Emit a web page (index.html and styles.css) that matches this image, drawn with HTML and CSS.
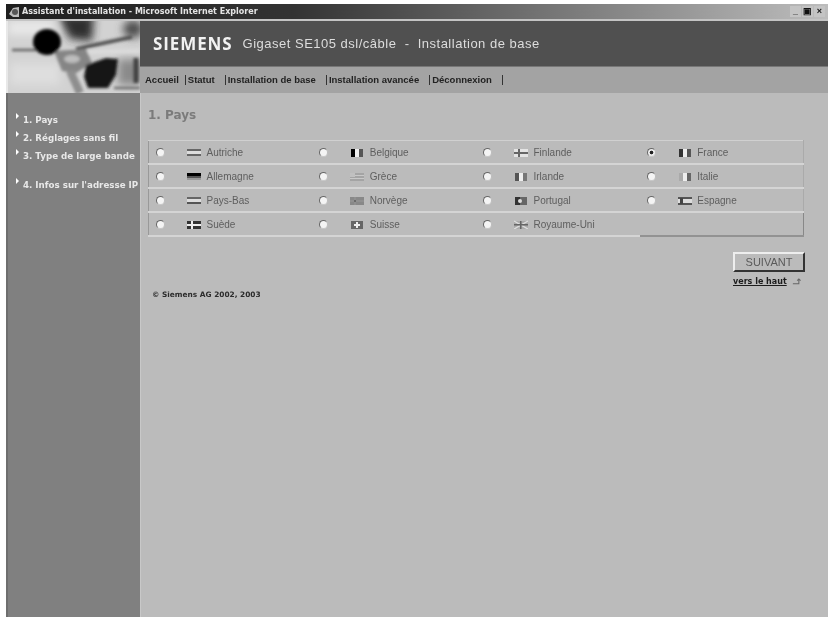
FILE: index.html

```html
<!DOCTYPE html>
<html lang="fr">
<head>
  <meta charset="UTF-8" />
  <title>Assistant d'installation - Microsoft Internet Explorer</title>
  <link rel="stylesheet" href="styles.css">
</head>
<body>
  <div class="window">
    <div class="titlebar">
      <svg class="ie-icon" viewBox="0 0 12 12"><path d="M1 8 L5 2 L11 1 L11 11 L5 11 Z" fill="#bbb"/><circle cx="7" cy="6" r="3" fill="#555"/></svg>
      <span class="title-text">Assistant d'installation - Microsoft Internet Explorer</span>
      <div class="win-buttons">
        <span class="win-btn">_</span>
        <span class="win-btn">&#9635;</span>
        <span class="win-btn">×</span>
      </div>
    </div>

    <div class="page">
      <div class="photo">
        <svg viewBox="0 0 132 72" width="132" height="72">
          <defs>
            <filter id="soft" x="-5%" y="-5%" width="110%" height="110%"><feGaussianBlur stdDeviation="1.6"/></filter>
            <filter id="softer" x="-20%" y="-20%" width="140%" height="140%"><feGaussianBlur stdDeviation="4"/></filter>
          </defs>
          <rect width="132" height="72" fill="#d2d2d2"/>
          <g filter="url(#softer)">
            <rect x="0" y="0" width="46" height="14" fill="#e8e8e8"/>
            <rect x="2" y="42" width="50" height="22" fill="#dedede"/>
            <path d="M50 -6 L86 -6 L84 20 L62 18 Z" fill="#2e2e2e"/>
            <ellipse cx="125" cy="8" rx="10" ry="9" fill="#4c4c4c"/>
            <rect x="110" y="38" width="22" height="26" fill="#8a8a8a"/>
          </g>
          <g filter="url(#soft)">
            <path d="M4 29 H29" stroke="#5c5c5c" stroke-width="2.4" fill="none"/>
            <path d="M68 28 L124 16" stroke="#4a4a4a" stroke-width="3.5" fill="none"/>
            <path d="M76 31 L132 30" stroke="#dcdcdc" stroke-width="4" fill="none"/>
            <path d="M46 30 L78 28 L84 42 L68 52 L54 50 Z" fill="#858585"/>
            <ellipse cx="64" cy="38" rx="8" ry="4" fill="#bdbdbd"/>
            <ellipse cx="39" cy="21" rx="14" ry="13" fill="#060606"/>
            <path d="M78 44 L98 37 L110 38 L108 54 L100 67 L80 67 L76 56 Z" fill="#161616"/>
            <path d="M62 50 L72 72" stroke="#8e8e8e" stroke-width="8" fill="none"/>
            <path d="M128 37 V62" stroke="#3c3c3c" stroke-width="5" fill="none"/>
            <path d="M106 67 H132" stroke="#5a5a5a" stroke-width="2" fill="none"/>
          </g>
        </svg>
      </div>

      <header class="brand">
        <span class="brand-name">SIEMENS</span>
        <span class="brand-title">Gigaset SE105 dsl/câble &nbsp;-&nbsp; Installation de base</span>
      </header>

      <nav class="topnav">
        <a>Accueil</a><a>Statut</a><a>Installation de base</a><a>Installation avancée</a><a>Déconnexion</a><i></i>
      </nav>

      <aside class="sidebar">
        <a class="step">1. Pays</a>
        <a class="step">2. Réglages sans fil</a>
        <a class="step">3. Type de large bande</a>
        <a class="step step-gap">4. Infos sur l'adresse IP</a>
      </aside>

      <main class="content">
        <h1>1. Pays</h1>

        <table class="countries">
          <tr>
            <td><input type="radio" name="pays"><svg class="flag" viewBox="0 0 14 9"><rect y="1" width="14" height="2" fill="#666"/><rect y="3" width="14" height="3" fill="#ddd"/><rect y="6" width="14" height="2" fill="#666"/></svg>Autriche</td>
            <td><input type="radio" name="pays"><svg class="flag" viewBox="0 0 14 9"><rect x="1" y="1" width="4" height="8" fill="#000"/><rect x="5" y="1" width="4" height="8" fill="#eee"/><rect x="9" y="1" width="4" height="8" fill="#555"/></svg>Belgique</td>
            <td><input type="radio" name="pays"><svg class="flag" viewBox="0 0 14 9"><rect y="1" width="14" height="8" fill="#e4e4e4"/><rect y="4" width="14" height="2" fill="#666"/><rect x="4" y="1" width="2" height="8" fill="#666"/></svg>Finlande</td>
            <td><input type="radio" name="pays" checked><svg class="flag" viewBox="0 0 14 9"><rect x="1" y="1" width="4" height="8" fill="#333"/><rect x="5" y="1" width="4" height="8" fill="#eee"/><rect x="9" y="1" width="4" height="8" fill="#555"/></svg>France</td>
          </tr>
          <tr>
            <td><input type="radio" name="pays"><svg class="flag" viewBox="0 0 14 9"><rect y="1" width="14" height="3" fill="#000"/><rect y="4" width="14" height="2" fill="#555"/><rect y="6" width="14" height="2" fill="#999"/></svg>Allemagne</td>
            <td><input type="radio" name="pays"><svg class="flag" viewBox="0 0 14 9"><rect y="1" width="14" height="8" fill="#a4a4a4"/><rect y="3" width="14" height="1" fill="#c8c8c8"/><rect y="6" width="14" height="1" fill="#c8c8c8"/><rect y="1" width="5" height="4" fill="#c0c0c0"/></svg>Grèce</td>
            <td><input type="radio" name="pays"><svg class="flag" viewBox="0 0 14 9"><rect x="1" y="1" width="4" height="8" fill="#555"/><rect x="5" y="1" width="4" height="8" fill="#eee"/><rect x="9" y="1" width="4" height="8" fill="#777"/></svg>Irlande</td>
            <td><input type="radio" name="pays"><svg class="flag" viewBox="0 0 14 9"><rect x="1" y="1" width="4" height="8" fill="#aaa"/><rect x="5" y="1" width="4" height="8" fill="#eee"/><rect x="9" y="1" width="4" height="8" fill="#666"/></svg>Italie</td>
          </tr>
          <tr>
            <td><input type="radio" name="pays"><svg class="flag" viewBox="0 0 14 9"><rect y="1" width="14" height="2" fill="#666"/><rect y="3" width="14" height="3" fill="#ddd"/><rect y="6" width="14" height="2" fill="#555"/></svg>Pays-Bas</td>
            <td><input type="radio" name="pays"><svg class="flag" viewBox="0 0 14 9"><rect y="1" width="14" height="8" fill="#888"/><rect y="4" width="14" height="2" fill="#ddd"/><rect x="4" y="1" width="2" height="8" fill="#ddd"/><rect y="4.5" width="14" height="1" fill="#444"/><rect x="4.5" y="1" width="1" height="8" fill="#444"/></svg>Norvège</td>
            <td><input type="radio" name="pays"><svg class="flag" viewBox="0 0 14 9"><rect x="1" y="1" width="12" height="8" fill="#666"/><rect x="1" y="1" width="5" height="8" fill="#333"/><circle cx="6" cy="5" r="2" fill="#ddd"/></svg>Portugal</td>
            <td><input type="radio" name="pays"><svg class="flag" viewBox="0 0 14 9"><rect y="1" width="14" height="2" fill="#555"/><rect y="3" width="14" height="4" fill="#ddd"/><rect y="7" width="14" height="2" fill="#555"/><rect x="2" y="2" width="3" height="6" fill="#444"/></svg>Espagne</td>
          </tr>
          <tr>
            <td><input type="radio" name="pays"><svg class="flag" viewBox="0 0 14 9"><rect y="1" width="14" height="8" fill="#333"/><rect y="4" width="14" height="2" fill="#eee"/><rect x="4" y="1" width="2" height="8" fill="#eee"/></svg>Suède</td>
            <td><input type="radio" name="pays"><svg class="flag" viewBox="0 0 14 9"><rect x="1" y="1" width="12" height="8" fill="#666"/><rect x="6" y="2" width="2" height="6" fill="#eee"/><rect x="4" y="4" width="6" height="2" fill="#eee"/></svg>Suisse</td>
            <td><input type="radio" name="pays"><svg class="flag" viewBox="0 0 14 9"><rect y="1" width="14" height="8" fill="#aaa"/><path d="M0 1 L14 9 M14 1 L0 9" stroke="#ddd" stroke-width="1.4"/><rect y="4" width="14" height="1.5" fill="#666"/><rect x="6" y="1" width="1.5" height="8" fill="#666"/></svg>Royaume-Uni</td>
            <td class="empty"></td>
          </tr>
        </table>

        <div class="footer-row">
          <small class="copyright">© Siemens AG 2002, 2003</small>
          <div class="actions">
            <button class="next">SUIVANT</button>
            <a class="totop">vers le haut<svg viewBox="0 0 14 9" width="12" height="9"><path d="M1 7 H8 V2 M6 3.5 L8 1.5 L10 3.5" fill="none" stroke="#666" stroke-width="1.2"/></svg></a>
          </div>
        </div>
      </main>
    </div>
  </div>
</body>
</html>
```

FILE: styles.css

```css
html, body {
  height: 100%;
}

body {
  margin: 0;
  padding: 4px 0 3px 6px;
  box-sizing: border-box;
  background-color: #fff;
  font-family: 'Liberation Sans', sans-serif;
}

.window {
  height: 100%;
  display: flex;
  flex-direction: column;
  background-color: #bbb;
  filter: blur(0.6px);
}

.titlebar {
  height: 15px;
  flex-shrink: 0;
  display: flex;
  align-items: center;
  gap: 2px;
  padding: 0 2px;
  background: linear-gradient(to right, #1f1f1f, #333 35%, #bdbdbd);
  border-bottom: 2px solid #c4c4c4;
}

.ie-icon {
  width: 12px;
  height: 12px;
}

.title-text {
  font-family: 'DejaVu Sans', sans-serif;
  font-size: 8px;
  font-weight: 700;
  color: #e4e4e4;
}

.win-buttons {
  margin-left: auto;
  display: flex;
  gap: 1px;
  padding-right: 1px;
}

.win-btn {
  width: 11px;
  height: 11px;
  display: flex;
  align-items: center;
  justify-content: center;
  background-color: #c4c4c4;
  color: #111;
  font-size: 9px;
  font-weight: 700;
  line-height: 1;
}

.page {
  flex: 1;
  display: grid;
  grid-template-columns: 134px 1fr;
  grid-template-rows: 46px 26px 1fr;
}

.photo {
  grid-row: 1 / 3;
  padding-left: 2px;
  background-color: #e8e8e8;
  font-size: 0;
}

.brand {
  display: flex;
  align-items: center;
  gap: 10px;
  padding-left: 13px;
  background-color: #505050;
  border-bottom: 1px solid #777;
}

.brand-name {
  font-family: 'Open Sans', sans-serif;
  font-size: 17px;
  font-weight: 700;
  letter-spacing: 0.9px;
  color: #f2f2f2;
}

.brand-title {
  font-size: 13px;
  letter-spacing: 0.5px;
  color: #ddd;
}

.topnav {
  display: flex;
  align-items: center;
  padding-left: 5px;
  background-color: #a3a3a3;
  font-size: 9.5px;
  font-weight: 700;
  line-height: 10px;
  color: #222;
}

.topnav a {
  height: 10px;
  padding-right: 8px;
}

.topnav a:first-child {
  padding-right: 4px;
}

.topnav a + a,
.topnav i {
  border-left: 1px solid #333;
  margin-left: 2px;
  padding-left: 2px;
}

.topnav i {
  height: 10px;
}

.sidebar {
  display: flex;
  flex-direction: column;
  padding-top: 18px;
  background-color: #808080;
  border-left: 2px solid #6e6e6e;
  overflow: hidden;
}

.step {
  position: relative;
  padding-left: 15px;
  height: 18px;
  font-family: 'DejaVu Sans', sans-serif;
  font-size: 8.7px;
  font-weight: 700;
  line-height: 18px;
  white-space: nowrap;
  color: #e8e8e8;
}

.step::before {
  content: "";
  position: absolute;
  left: 8px;
  top: 2px;
  border-left: 3px solid #fff;
  border-top: 3px solid transparent;
  border-bottom: 3px solid transparent;
}

.step-gap {
  margin-top: 11px;
}

.content {
  padding: 14px 23px 0 7px;
  border-left: 1px solid #c8c8c8;
}

.content h1 {
  margin: 0 0 17px;
  font-family: 'DejaVu Sans', sans-serif;
  font-size: 12px;
  font-weight: 700;
  line-height: 16px;
  color: #7b7b7b;
}

.countries {
  width: 656px;
  table-layout: fixed;
  border-collapse: collapse;
  border-top: 1px solid #d0d0d0;
  border-left: 1px solid #999;
  border-right: 1px solid #aaa;
  font-size: 10px;
  color: #5e5e5e;
}

.countries td {
  height: 22px;
  padding: 0;
  border-bottom: 2px solid #d4d4d4;
  white-space: nowrap;
}

.countries td.empty {
  border-bottom: 2px solid #929292;
  border-right: 1px solid #888;
}

.countries input {
  appearance: none;
  box-sizing: border-box;
  width: 9px;
  height: 9px;
  margin: 0 22px 0 7px;
  vertical-align: middle;
  background-color: #f4f4f4;
  border: 1.5px solid;
  border-color: #666 #bbb #c8c8c8 #666;
  border-radius: 50%;
}

.countries input:checked {
  background: radial-gradient(circle, #222 28%, #eee 45%);
}

.flag {
  width: 14px;
  height: 9px;
  margin-right: 5.5px;
  vertical-align: middle;
}

.footer-row {
  display: flex;
  justify-content: space-between;
  align-items: flex-start;
  padding-top: 15px;
}

.copyright {
  margin: 38px 0 0 4px;
  font-family: 'DejaVu Sans', sans-serif;
  font-size: 7.4px;
  font-weight: 700;
  color: #2c2c2c;
}

.actions {
  display: flex;
  flex-direction: column;
  gap: 4px;
  width: 72px;
}

.next {
  height: 20px;
  padding: 0;
  background-color: #bbb;
  border: 2px solid;
  border-color: #eee #333 #333 #eee;
  font-family: 'Liberation Sans', sans-serif;
  font-size: 11px;
  color: #5a5a5a;
}

.totop {
  display: flex;
  align-items: center;
  gap: 5px;
  font-family: 'DejaVu Sans', sans-serif;
  font-size: 8px;
  font-weight: 700;
  line-height: 11px;
  color: #1c1c1c;
  text-decoration: underline;
}
```
